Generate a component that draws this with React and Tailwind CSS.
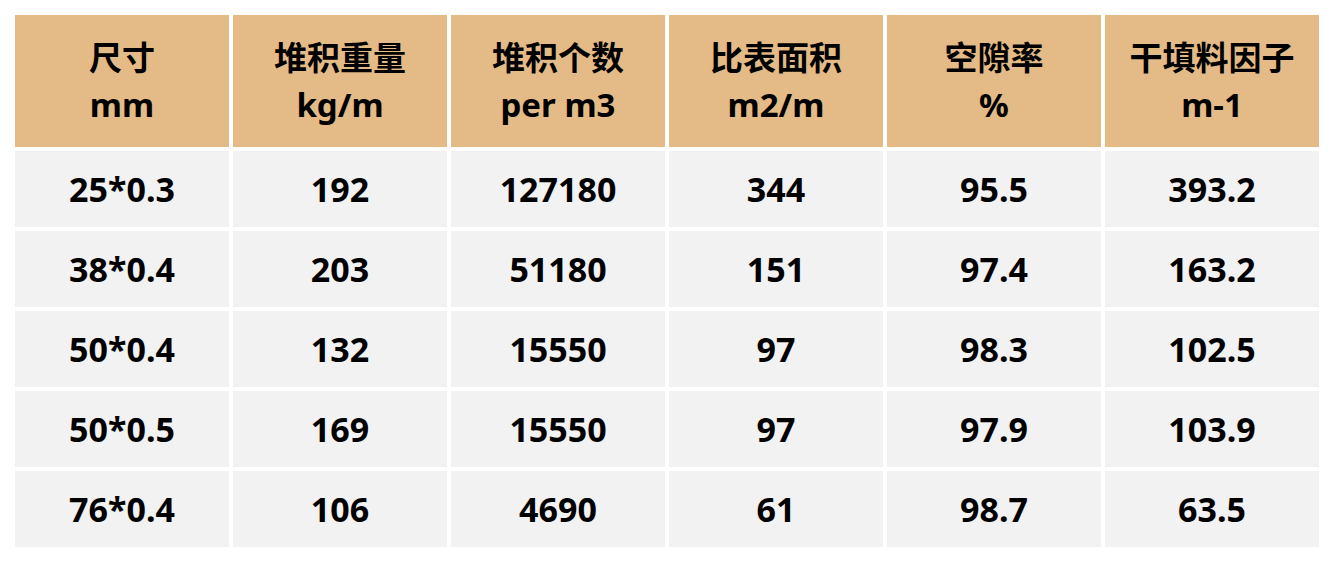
import React from "react";

const head = [
  ["尺寸", "mm"],
  ["堆积重量", "kg/m"],
  ["堆积个数", "per m3"],
  ["比表面积", "m2/m"],
  ["空隙率", "%"],
  ["干填料因子", "m-1"],
];

const rows = [
  ["25*0.3", "192", "127180", "344", "95.5", "393.2"],
  ["38*0.4", "203", "51180", "151", "97.4", "163.2"],
  ["50*0.4", "132", "15550", "97", "98.3", "102.5"],
  ["50*0.5", "169", "15550", "97", "97.9", "103.9"],
  ["76*0.4", "106", "4690", "61", "98.7", "63.5"],
];

const App = () => {
  return (
    <div
      className="w-[1334px] h-[562px] bg-white pt-[15px] pl-[15px]"
      style={{ fontFamily: '"Noto Sans", "Noto Sans CJK SC", sans-serif' }}
    >
      <div className="w-[1304px] grid grid-cols-6 gap-x-[4px] gap-y-[4px] text-black font-bold text-[34px]">
        {head.map((h, i) => (
          <div
            key={i}
            className="h-[132px] bg-[#e4bb86] flex flex-col items-center justify-center leading-[47px] text-[33px]"
          >
            <span>{h[0]}</span>
            <span>{h[1]}</span>
          </div>
        ))}
        {rows.map((r, i) =>
          r.map((c, j) => (
            <div
              key={i + "-" + j}
              className="h-[76px] bg-[#f2f2f2] flex items-center justify-center"
            >
              {c}
            </div>
          ))
        )}
      </div>
    </div>
  );
};

export default App;
